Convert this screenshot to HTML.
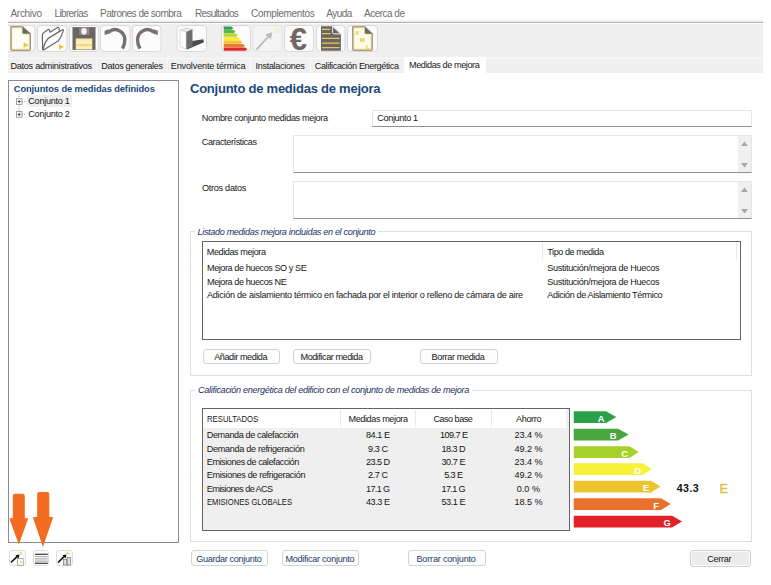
<!DOCTYPE html>
<html lang="es"><head><meta charset="utf-8"><title>Medidas de mejora</title>
<style>
html,body{margin:0;padding:0;background:#fff;}
body{width:771px;height:585px;position:relative;overflow:hidden;font-family:"Liberation Sans",sans-serif;font-size:9.1px;color:#161616;}
.a{position:absolute;white-space:nowrap;}
.menu{color:#6e6e6e;}
.box{position:absolute;box-sizing:border-box;background:#fff;}
.inp{border:1px solid #e6e6e6;border-bottom:1px solid #8f8f8f;}
.btn{position:absolute;box-sizing:border-box;border:1px solid #d3d3d3;border-radius:3px;background:#fdfdfd;}
.grp{position:absolute;box-sizing:border-box;border:1px solid #dedede;}
.leg{font-style:italic;color:#1b2f63;}
.blue{color:#1c487a;font-weight:bold;}
.ic{position:absolute;box-sizing:border-box;border:1px solid #dadada;border-radius:4px;background:#fbfbfb;top:25px;height:27px;}
svg{position:absolute;left:0;top:0;}
</style></head><body>
<!-- toolbar band -->
<div class="box" style="left:8px;top:20px;width:755px;height:53px;background:#f0f0f0;"></div>
<div class="box" style="left:8px;top:22px;width:755px;height:1px;background:#b0b0b0;"></div>
<div class="box" style="left:8px;top:23px;width:755px;height:1px;background:#fdfdfd;"></div>
<!-- active tab -->
<div class="box" style="left:404px;top:57px;width:82px;height:16px;background:#fff;"></div>
<!-- left panel -->
<div class="box" style="left:8px;top:80px;width:171px;height:463px;border:1px solid #8c8c8c;"></div>
<div class="box" style="left:27px;top:95px;width:45px;height:12px;background:#efefef;"></div>
<!-- inputs -->
<div class="box inp" style="left:372px;top:110px;width:380px;height:17px;"></div>
<div class="box inp" style="left:293px;top:135px;width:459px;height:38px;"></div>
<div class="box" style="left:738px;top:136px;width:13px;height:36px;background:#f0f0f0;"></div>
<div class="box inp" style="left:293px;top:181px;width:459px;height:38px;"></div>
<div class="box" style="left:738px;top:182px;width:13px;height:36px;background:#f0f0f0;"></div>
<!-- group 1 -->
<div class="grp" style="left:190px;top:231px;width:562px;height:145px;"></div>
<div class="box" style="left:195px;top:229px;width:183px;height:6px;"></div>
<div class="box" style="left:202px;top:241px;width:539px;height:99px;border:1px solid #646464;"></div>
<div class="box" style="left:542px;top:243px;width:1px;height:17px;background:#e9e9e9;"></div>
<div class="box" style="left:736px;top:243px;width:1px;height:17px;background:#e9e9e9;"></div>
<div class="btn" style="left:203px;top:349px;width:77px;height:15px;"></div>
<div class="btn" style="left:293px;top:349px;width:78px;height:15px;"></div>
<div class="btn" style="left:420px;top:349px;width:78px;height:15px;"></div>
<!-- group 2 -->
<div class="grp" style="left:190px;top:390px;width:562px;height:152px;"></div>
<div class="box" style="left:195px;top:387px;width:277px;height:6px;"></div>
<div class="box" style="left:202px;top:408px;width:368px;height:123px;border:1px solid #646464;background:#efefef;"></div>
<div class="box" style="left:203px;top:409px;width:363px;height:19px;"></div>
<div class="box" style="left:340px;top:410px;width:1px;height:17px;background:#e9e9e9;"></div>
<div class="box" style="left:415px;top:410px;width:1px;height:17px;background:#e9e9e9;"></div>
<div class="box" style="left:491px;top:410px;width:1px;height:17px;background:#e9e9e9;"></div>
<!-- bottom buttons -->
<div class="btn" style="left:191px;top:550px;width:77px;height:16px;"></div>
<div class="btn" style="left:282px;top:550px;width:77px;height:16px;"></div>
<div class="btn" style="left:408px;top:550px;width:78px;height:16px;"></div>
<div class="btn" style="left:690px;top:550px;width:61px;height:17px;background:#ececec;border-color:#d0d0d0;box-shadow:inset 0 0 0 1px #fcfcfc;"></div>
<div class="btn" style="left:9px;top:550px;width:17px;height:16px;border-color:#dedede;"></div>
<div class="btn" style="left:33px;top:550px;width:16px;height:16px;border-color:#dedede;"></div>
<div class="btn" style="left:56px;top:550px;width:17px;height:16px;border-color:#dedede;"></div>
<svg width="771" height="585" viewBox="0 0 771 585">
<defs><clipPath id="cl"><rect x="8" y="24" width="755" height="49"/></clipPath></defs>
<!-- tab dividers -->
<g stroke="#f9f9f9" stroke-width="1"><path d="M96.5,59V73M167.5,59V73M250.5,59V73M310.5,59V73M8,58.5H404"/><path d="M486,58.5H763" /></g>
<!-- toolbar buttons -->
<g clip-path="url(#cl)" fill="#fbfbfb" stroke="#d9d9d9" stroke-width="1">
<rect x="5.5" y="25.5" width="29.5" height="26" rx="3.5"/>
<rect x="37.5" y="25.5" width="29.5" height="26" rx="3.5"/>
<rect x="69.5" y="25.5" width="29" height="26" rx="3.5"/>
<rect x="100.5" y="25.5" width="29.5" height="26" rx="3.5"/>
<rect x="132.5" y="25.5" width="28.5" height="26" rx="3.5"/>
<rect x="177" y="25.5" width="29.5" height="26" rx="3.5"/>
<rect x="221.5" y="25.5" width="29" height="26" rx="3.5"/>
<rect x="253" y="25.5" width="29" height="26" rx="3.5" fill="#f4f4f4" stroke="#e6e6e6"/>
<rect x="284.5" y="25.5" width="29" height="26" rx="3.5"/>
<rect x="316.5" y="25.5" width="28.5" height="26" rx="3.5"/>
<rect x="347.5" y="25.5" width="30" height="26" rx="3.5"/>
</g>
<!-- icon1 new doc -->
<path d="M10.9,26.7H22.5L30.3,33.8V49.4Q30.3,50.3 29.4,50.3H11.8Q10.9,50.3 10.9,49.4Z" fill="#f6e7ab" stroke="#8a806a" stroke-width="1.1"/>
<path d="M12.6,28.4H21.5V34.8H28.6V48.6H12.6Z" fill="#fffef6"/>
<path d="M22.5,26.9L30.1,33.7H23.9Q22.5,33.7 22.5,32.3Z" fill="#6b6565"/>
<path d="M23.6,42.3L28.6,45.2L23.6,48.1Z" fill="#f2c33f"/>
<!-- icon2 open folder -->
<g fill="#fdfdfd" stroke="#686868" stroke-width="1.2" stroke-linejoin="round" stroke-linecap="round">
<path d="M42.7,49.5L42.3,35.5Q42.3,33.5 44,32.4L48.2,29.6Q49,29.1 49.3,30L50.1,32.3L57.4,27.5Q58.8,26.9 59,28.2L59.4,31.4L48.5,38.2Z"/>
<path d="M42.9,49.8Q44.5,42 48.5,38.2L62.5,29.8Q63.6,29.4 63.3,30.6Q61,38 58,41L43.6,50Z"/>
</g>
<path d="M59,44L64,46.7L59,49.7Z" fill="#f2c33f"/>
<!-- icon3 floppy -->
<rect x="72.5" y="27.1" width="23" height="22.8" fill="#6b6565"/>
<rect x="79.3" y="27.1" width="10.2" height="7.6" fill="#8d8888"/>
<ellipse cx="84" cy="31.2" rx="2.7" ry="3.5" fill="#f2f2f2"/>
<rect x="75.8" y="38.7" width="16.4" height="10.8" fill="#fcefb8"/>
<rect x="75.8" y="38.7" width="16.4" height="1.6" fill="#f8e6a4"/>
<rect x="75.8" y="44" width="16.4" height="2.2" fill="#f3d786"/>
<!-- icon4 undo -->
<path d="M109,31.8A9.9,10.2 0 0 1 124.9,39.5A17.8,17.8 0 0 1 122.4,48.6" fill="none" stroke="#787070" stroke-width="3.4"/>
<path d="M104.6,30.8V35L110.2,33.2L108.9,29.2Z" fill="#787070"/>
<!-- icon5 redo -->
<path d="M153.4,31.8A9.9,10.2 0 0 0 137.5,39.5A17.8,17.8 0 0 0 140.0,48.6" fill="none" stroke="#787070" stroke-width="3.4"/>
<path d="M157.8,30.8V35L152.2,33.2L153.5,29.2Z" fill="#787070"/>
<!-- icon6 building -->
<path d="M192.2,40.9L203.2,39.2L204,42.2L187,49.5L186.3,49.3Z" fill="#4e4c4a"/>
<path d="M180,30.1L187,27.8L192.5,29.3L186.3,32.1Z" fill="#e9e9e9" stroke="#bdbdbd" stroke-width="0.5"/>
<path d="M180,30.1L186.3,32.1V49.3L180,46.5Z" fill="#fdfdfd" stroke="#bdbdbd" stroke-width="0.5"/>
<path d="M186.3,32.1L192.5,29.3V45.7L186.3,49.3Z" fill="#6f6d6b"/>
<!-- icon7 energy -->
<path d="M223.7,26.5H231.2L233.4,28.15L231.2,29.8H223.7Z" fill="#2e9e50"/>
<path d="M223.7,30.0H233.4L235.6,31.65L233.4,33.3H223.7Z" fill="#5cb347"/>
<path d="M223.7,33.5H235.8L238,35.15L235.8,36.8H223.7Z" fill="#b4d334"/>
<path d="M223.7,37.0H238.1L240.3,38.65L238.1,40.3H223.7Z" fill="#f6ec3a"/>
<path d="M223.7,40.5H240.2L242.4,42.15L240.2,43.8H223.7Z" fill="#f2c230"/>
<path d="M223.7,44.0H242.8L245,45.65L242.8,47.3H223.7Z" fill="#ea7a2c"/>
<path d="M223.7,47.5H245.3L247.5,49.15L245.3,50.8H223.7Z" fill="#dd2a2a"/>
<!-- icon8 arrow -->
<path d="M256.4,49.6L268.6,36.4" stroke="#bcbcbc" stroke-width="1.8"/>
<path d="M272.4,32.2L270.8,39.6L265.2,34.4Z" fill="#bcbcbc"/>
<!-- icon10 doc lines -->
<path d="M321,26.2H332.4L340.9,33.9V50.7H321Z" fill="#6b6565"/>
<path d="M332.6,26.4L340.7,33.9H334Q332.6,33.9 332.6,32.5Z" fill="#6b6565" stroke="#eeeeee" stroke-width="1"/>
<g stroke="#e6c75a" stroke-width="1.3"><path d="M322,29.3H330.5M322,33.7H330.5M322,38.3H339.6M322,43.1H339.6M322,47.6H339.6"/></g>
<!-- icon11 xml -->
<path d="M352.8,26.7H364.8L372.2,33.8V49.4Q372.2,50.3 371.3,50.3H353.7Q352.8,50.3 352.8,49.4Z" fill="#f6e7ab" stroke="#8a806a" stroke-width="1.1"/>
<path d="M354.5,28.4H363.8V34.8H370.5V48.6H354.5Z" fill="#fffce6"/>
<path d="M364.8,26.9L372.1,33.8H366.2Q364.8,33.8 364.8,32.4Z" fill="#6b6565"/>
<!-- scrollbar arrows -->
<g fill="#a8a8a8">
<path d="M741,146L744.5,141.6L748,146Z"/><path d="M741,163L744.5,167.4L748,163Z"/>
<path d="M741,192L744.5,187.6L748,192Z"/><path d="M741,209L744.5,213.4L748,209Z"/>
</g>
<!-- tree -->
<g stroke="#8a8a8a" stroke-width="0.8" fill="#fff">
<path d="M19.2,94V112" stroke-dasharray="1,1" stroke="#9a9a9a"/>
<path d="M22,101.6H26M22,114.4H26" stroke-dasharray="1,1" stroke="#9a9a9a"/>
<rect x="16.4" y="98.8" width="5.6" height="5.6"/>
<rect x="16.4" y="111.6" width="5.6" height="5.6"/>
<path d="M17.6,101.6H20.8M19.2,100V103.2M17.6,114.4H20.8M19.2,112.8V116" stroke="#333"/>
</g>
<!-- energy arrows -->
<path d="M573.75,411.25H606L616.25,417.1L606,423H573.75Z" fill="#2ba14a"/>
<path d="M573.75,428.75H618L628.75,434.6L618,440.5H573.75Z" fill="#4aa740"/>
<path d="M573.75,446.25H629.5L638.75,452.1L629.5,458H573.75Z" fill="#a6d229"/>
<path d="M573.75,463.25H642.5L651.75,469.1L642.5,475H573.75Z" fill="#f6f139"/>
<path d="M573.75,480.75H651L660.5,486.6L651,492.5H573.75Z" fill="#ecc52e"/>
<path d="M573.75,498.25H661L670.75,504.1L661,510H573.75Z" fill="#e8712b"/>
<path d="M573.75,515.75H672L682,521.6L672,527.5H573.75Z" fill="#e2212a"/>
<!-- orange arrows -->
<path d="M12.8,496Q12.8,493.8 15,493.8H22.6Q24.8,493.8 24.8,496V518L28.2,518.6L18.8,544.6L9.4,518.6L12.8,518Z" fill="#f36c21"/>
<path d="M37.2,494Q37.2,491.9 39.4,491.9H47.1Q49.3,491.9 49.3,494V516.8L53.2,517.3L42.9,547L32.9,517.3L37.2,516.8Z" fill="#f36c21"/>
<!-- small icons bottom-left -->
<g>
<path d="M10.9,562.5L17.6,556.1" stroke="#111" stroke-width="1.6"/>
<path d="M19.4,554.4L18.8,558.4L15.4,555.2Z" fill="#111"/>
<path d="M19.2,553.8L20.7,551.6L22.2,553.8Z" fill="#fff6b0" stroke="#e6c030" stroke-width="0.6"/>
<rect x="17.6" y="558.6" width="5.6" height="6.6" fill="#fff" stroke="#8a8a8a" stroke-width="0.7"/>
<path d="M20.2,560.8L22.2,562L20.2,563.3Z" fill="#e6c030"/>
<path d="M35,554.3H47.8M35,563.3H47.8" stroke="#111" stroke-width="1.1"/><path d="M35,556.7H47.8M35,558.9H47.8M35,561.1H47.8" stroke="#8a8a8a" stroke-width="0.8"/>
<path d="M58,562.5L64.6,556.1" stroke="#111" stroke-width="1.6"/>
<path d="M66.4,554.4L65.8,558.4L62.4,555.2Z" fill="#111"/>
<path d="M66.4,553.8L67.9,551.6L69.4,553.8Z" fill="#fff6b0" stroke="#e6c030" stroke-width="0.6"/>
<rect x="63.6" y="559.6" width="3.2" height="5.4" fill="#ddd" stroke="#777" stroke-width="0.7"/>
<rect x="67.2" y="557.6" width="3.4" height="7.4" fill="#ddd" stroke="#777" stroke-width="0.7"/>
</g>
</svg>

<div class="a menu" style="left:10.50px;top:7.34px;font-size:10px;line-height:14px;letter-spacing:-0.310px;">Archivo</div>
<div class="a menu" style="left:54.50px;top:7.34px;font-size:10px;line-height:14px;letter-spacing:-0.645px;">Librerías</div>
<div class="a menu" style="left:100.00px;top:7.34px;font-size:10px;line-height:14px;letter-spacing:-0.489px;">Patrones de sombra</div>
<div class="a menu" style="left:195.00px;top:7.34px;font-size:10px;line-height:14px;letter-spacing:-0.698px;">Resultados</div>
<div class="a menu" style="left:251.00px;top:7.34px;font-size:10px;line-height:14px;letter-spacing:-0.320px;">Complementos</div>
<div class="a menu" style="left:326.25px;top:7.34px;font-size:10px;line-height:14px;letter-spacing:-0.547px;">Ayuda</div>
<div class="a menu" style="left:364.00px;top:7.34px;font-size:10px;line-height:14px;letter-spacing:-0.504px;">Acerca de</div>
<div class="a " style="left:10.50px;top:60.35px;font-size:9.1px;line-height:13px;letter-spacing:-0.272px;">Datos administrativos</div>
<div class="a " style="left:101.25px;top:60.35px;font-size:9.1px;line-height:13px;letter-spacing:-0.320px;">Datos generales</div>
<div class="a " style="left:170.75px;top:60.35px;font-size:9.1px;line-height:13px;letter-spacing:-0.153px;">Envolvente térmica</div>
<div class="a " style="left:255.50px;top:60.35px;font-size:9.1px;line-height:13px;letter-spacing:-0.320px;">Instalaciones</div>
<div class="a " style="left:314.75px;top:60.35px;font-size:9.1px;line-height:13px;letter-spacing:-0.376px;">Calificación Energética</div>
<div class="a " style="left:409.00px;top:59.35px;font-size:9.1px;line-height:13px;letter-spacing:-0.412px;">Medidas de mejora</div>
<div class="a blue" style="left:13.80px;top:82.88px;font-size:9.3px;line-height:13px;letter-spacing:-0.089px;">Conjuntos de medidas definidos</div>
<div class="a " style="left:28.30px;top:95.15px;font-size:9.1px;line-height:13px;letter-spacing:-0.267px;">Conjunto 1</div>
<div class="a " style="left:28.30px;top:108.15px;font-size:9.1px;line-height:13px;letter-spacing:-0.267px;">Conjunto 2</div>
<div class="a blue" style="left:190.00px;top:79.50px;font-size:13px;line-height:18px;letter-spacing:-0.239px;">Conjunto de medidas de mejora</div>
<div class="a " style="left:201.75px;top:111.85px;font-size:9.1px;line-height:13px;letter-spacing:-0.353px;">Nombre conjunto medidas mejora</div>
<div class="a " style="left:377.30px;top:112.35px;font-size:9.1px;line-height:13px;letter-spacing:-0.356px;">Conjunto 1</div>
<div class="a " style="left:201.75px;top:136.35px;font-size:9.1px;line-height:13px;letter-spacing:-0.386px;">Características</div>
<div class="a " style="left:202.00px;top:182.35px;font-size:9.1px;line-height:13px;letter-spacing:-0.277px;">Otros datos</div>
<div class="a leg" style="left:197.50px;top:226.10px;font-size:9.1px;line-height:13px;letter-spacing:-0.340px;">Listado medidas mejora incluidas en el conjunto</div>
<div class="a " style="left:206.75px;top:245.60px;font-size:9.1px;line-height:13px;letter-spacing:-0.419px;">Medidas mejora</div>
<div class="a " style="left:547.30px;top:245.60px;font-size:9.1px;line-height:13px;letter-spacing:-0.435px;">Tipo de medida</div>
<div class="a " style="left:207.00px;top:262.35px;font-size:9.1px;line-height:13px;letter-spacing:-0.432px;">Mejora de huecos SO y SE</div>
<div class="a " style="left:547.30px;top:262.35px;font-size:9.1px;line-height:13px;letter-spacing:-0.319px;">Sustitución/mejora de Huecos</div>
<div class="a " style="left:207.00px;top:275.85px;font-size:9.1px;line-height:13px;letter-spacing:-0.428px;">Mejora de huecos NE</div>
<div class="a " style="left:547.30px;top:275.85px;font-size:9.1px;line-height:13px;letter-spacing:-0.319px;">Sustitución/mejora de Huecos</div>
<div class="a " style="left:207.00px;top:288.85px;font-size:9.1px;line-height:13px;letter-spacing:-0.282px;">Adición de aislamiento térmico en fachada por el interior o relleno de cámara de aire</div>
<div class="a " style="left:547.30px;top:288.85px;font-size:9.1px;line-height:13px;letter-spacing:-0.393px;">Adición de Aislamiento Térmico</div>
<div class="a " style="left:214.25px;top:350.60px;font-size:9.1px;line-height:13px;letter-spacing:-0.449px;">Añadir medida</div>
<div class="a " style="left:300.50px;top:350.60px;font-size:9.1px;line-height:13px;letter-spacing:-0.450px;">Modificar medida</div>
<div class="a " style="left:431.50px;top:350.60px;font-size:9.1px;line-height:13px;letter-spacing:-0.365px;">Borrar medida</div>
<div class="a leg" style="left:198.00px;top:383.85px;font-size:9.1px;line-height:13px;letter-spacing:-0.305px;">Calificación energética del edificio con el conjunto de medidas de mejora</div>
<div class="a " style="left:206.75px;top:412.60px;font-size:9.1px;line-height:13px;transform:scaleX(0.8497);transform-origin:0 0;">RESULTADOS</div>
<div class="a " style="left:348.50px;top:412.60px;font-size:9.1px;line-height:13px;letter-spacing:-0.400px;">Medidas mejora</div>
<div class="a " style="left:433.50px;top:412.60px;font-size:9.1px;line-height:13px;letter-spacing:-0.529px;">Caso base</div>
<div class="a " style="left:516.00px;top:412.60px;font-size:9.1px;line-height:13px;letter-spacing:-0.359px;">Ahorro</div>
<div class="a " style="left:206.75px;top:428.85px;font-size:9.1px;line-height:13px;letter-spacing:-0.397px;">Demanda de calefacción</div>
<div class="a " style="left:366.00px;top:428.85px;font-size:9.1px;line-height:13px;letter-spacing:-0.439px;">84.1 E</div>
<div class="a " style="left:440.00px;top:428.85px;font-size:9.1px;line-height:13px;letter-spacing:-0.560px;">109.7 E</div>
<div class="a " style="left:514.50px;top:428.85px;font-size:9.1px;line-height:13px;letter-spacing:-0.062px;">23.4 %</div>
<div class="a " style="left:206.75px;top:442.60px;font-size:9.1px;line-height:13px;letter-spacing:-0.311px;">Demanda de refrigeración</div>
<div class="a " style="left:368.00px;top:442.60px;font-size:9.1px;line-height:13px;letter-spacing:-0.388px;">9.3 C</div>
<div class="a " style="left:441.50px;top:442.60px;font-size:9.1px;line-height:13px;letter-spacing:-0.559px;">18.3 D</div>
<div class="a " style="left:514.50px;top:442.60px;font-size:9.1px;line-height:13px;letter-spacing:-0.062px;">49.2 %</div>
<div class="a " style="left:206.75px;top:455.85px;font-size:9.1px;line-height:13px;letter-spacing:-0.440px;">Emisiones de calefacción</div>
<div class="a " style="left:366.00px;top:455.85px;font-size:9.1px;line-height:13px;letter-spacing:-0.539px;">23.5 D</div>
<div class="a " style="left:441.50px;top:455.85px;font-size:9.1px;line-height:13px;letter-spacing:-0.459px;">30.7 E</div>
<div class="a " style="left:514.50px;top:455.85px;font-size:9.1px;line-height:13px;letter-spacing:-0.062px;">23.4 %</div>
<div class="a " style="left:206.75px;top:469.35px;font-size:9.1px;line-height:13px;letter-spacing:-0.357px;">Emisiones de refrigeración</div>
<div class="a " style="left:368.00px;top:469.35px;font-size:9.1px;line-height:13px;letter-spacing:-0.388px;">2.7 C</div>
<div class="a " style="left:444.25px;top:469.35px;font-size:9.1px;line-height:13px;letter-spacing:-0.621px;">5.3 E</div>
<div class="a " style="left:514.50px;top:469.35px;font-size:9.1px;line-height:13px;letter-spacing:-0.062px;">49.2 %</div>
<div class="a " style="left:206.75px;top:482.85px;font-size:9.1px;line-height:13px;letter-spacing:-0.604px;">Emisiones de ACS</div>
<div class="a " style="left:366.00px;top:482.85px;font-size:9.1px;line-height:13px;letter-spacing:-0.642px;">17.1 G</div>
<div class="a " style="left:441.50px;top:482.85px;font-size:9.1px;line-height:13px;letter-spacing:-0.662px;">17.1 G</div>
<div class="a " style="left:516.75px;top:482.85px;font-size:9.1px;line-height:13px;letter-spacing:-0.004px;">0.0 %</div>
<div class="a " style="left:206.75px;top:496.35px;font-size:9.1px;line-height:13px;transform:scaleX(0.8367);transform-origin:0 0;">EMISIONES GLOBALES</div>
<div class="a " style="left:366.00px;top:496.35px;font-size:9.1px;line-height:13px;letter-spacing:-0.439px;">43.3 E</div>
<div class="a " style="left:441.50px;top:496.35px;font-size:9.1px;line-height:13px;letter-spacing:-0.459px;">53.1 E</div>
<div class="a " style="left:514.50px;top:496.35px;font-size:9.1px;line-height:13px;letter-spacing:-0.062px;">18.5 %</div>
<div class="a " style="left:676.75px;top:480.73px;font-size:10.6px;line-height:15px;letter-spacing:0.458px;font-weight:bold;color:#111">43.3</div>
<div class="a " style="left:719.48px;top:479.96px;font-size:12.8px;line-height:18px;letter-spacing:0.000px;color:#e3bf3c;-webkit-text-stroke:0.35px #e3bf3c">E</div>
<div class="a " style="left:196.25px;top:552.60px;font-size:9.1px;line-height:13px;letter-spacing:-0.319px;color:#1f3a68">Guardar conjunto</div>
<div class="a " style="left:285.50px;top:552.60px;font-size:9.1px;line-height:13px;letter-spacing:-0.283px;color:#1f3a68">Modificar conjunto</div>
<div class="a " style="left:416.50px;top:552.60px;font-size:9.1px;line-height:13px;letter-spacing:-0.199px;color:#1f3a68">Borrar conjunto</div>
<div class="a " style="left:707.25px;top:553.35px;font-size:9.1px;line-height:13px;letter-spacing:-0.306px;">Cerrar</div>
<div class="a " style="left:597.81px;top:411.84px;font-size:9.4px;line-height:13px;letter-spacing:0.000px;font-weight:bold;color:#fff">A</div>
<div class="a " style="left:609.81px;top:429.34px;font-size:9.4px;line-height:13px;letter-spacing:0.000px;font-weight:bold;color:#fff">B</div>
<div class="a " style="left:621.31px;top:446.84px;font-size:9.4px;line-height:13px;letter-spacing:0.000px;font-weight:bold;color:#fff">C</div>
<div class="a " style="left:634.31px;top:463.84px;font-size:9.4px;line-height:13px;letter-spacing:0.000px;font-weight:bold;color:#fff">D</div>
<div class="a " style="left:643.07px;top:481.34px;font-size:9.4px;line-height:13px;letter-spacing:0.000px;font-weight:bold;color:#fff">E</div>
<div class="a " style="left:653.33px;top:498.84px;font-size:9.4px;line-height:13px;letter-spacing:0.000px;font-weight:bold;color:#fff">F</div>
<div class="a " style="left:663.55px;top:516.34px;font-size:9.4px;line-height:13px;letter-spacing:0.000px;font-weight:bold;color:#fff">G</div>
<div class="a " style="left:355.14px;top:28.82px;font-size:6.0px;line-height:8px;letter-spacing:0.000px;font-weight:bold;color:#e6c453">X</div>
<div class="a " style="left:359.85px;top:36.22px;font-size:6.0px;line-height:8px;letter-spacing:0.000px;font-weight:bold;color:#e6c453">M</div>
<div class="a " style="left:366.01px;top:42.72px;font-size:6.0px;line-height:8px;letter-spacing:0.000px;font-weight:bold;color:#e6c453">L</div>
<div class="a " style="left:274.21px;top:24.45px;font-size:8.8px;line-height:12px;letter-spacing:0.000px;color:#f5e6ab">A</div>
<div class="a " style="left:289.67px;top:18.36px;font-size:31px;line-height:43px;letter-spacing:0.000px;font-weight:bold;color:#6f6767">€</div>
</body></html>
